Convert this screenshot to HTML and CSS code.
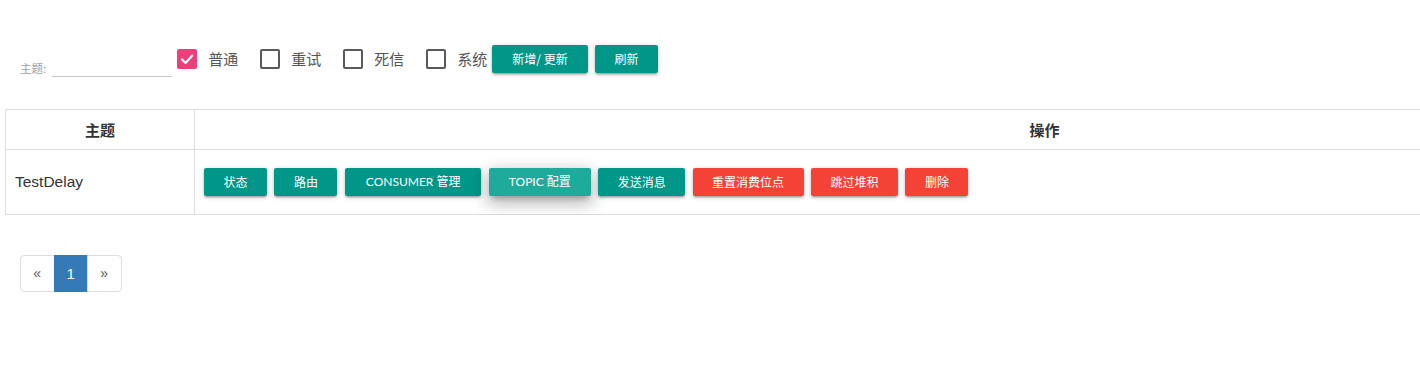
FILE: index.html
```html
<!DOCTYPE html>
<html lang="zh">
<head>
<meta charset="utf-8">
<title>Topic</title>
<link rel="stylesheet" href="styles.css">
</head>
<body>
<div class="page">
  <form class="filters">
    <div class="field">
      <label class="field-label">主题:</label>
      <span class="field-input"></span>
    </div>
    <label class="check">
      <span class="box box-on">
        <svg viewBox="0 0 20 20" width="20" height="20"><path d="M5 10.5 L8.6 14 L15.2 6.6" fill="none" stroke="#fff" stroke-width="2.2" stroke-linecap="round" stroke-linejoin="round"/></svg>
      </span>
      <span class="check-text">普通</span>
    </label>
    <label class="check">
      <span class="box"></span>
      <span class="check-text">重试</span>
    </label>
    <label class="check">
      <span class="box"></span>
      <span class="check-text">死信</span>
    </label>
    <label class="check check-last">
      <span class="box"></span>
      <span class="check-text">系统</span>
    </label>
    <button type="button" class="btn btn-add">新增/ 更新</button>
    <button type="button" class="btn">刷新</button>
  </form>

  <div class="table-wrap">
    <table class="table">
      <thead>
        <tr>
          <th class="col-topic">主题</th>
          <th>操作</th>
        </tr>
      </thead>
      <tbody>
        <tr>
          <td class="topic-name">TestDelay</td>
          <td class="ops">
            <div class="ops-row">
              <button type="button" class="btn">状态</button>
              <button type="button" class="btn">路由</button>
              <button type="button" class="btn btn-latin btn-consumer">CONSUMER 管理</button>
              <button type="button" class="btn btn-hover btn-latin">TOPIC 配置</button>
              <button type="button" class="btn">发送消息</button>
              <button type="button" class="btn btn-red">重置消费位点</button>
              <button type="button" class="btn btn-red">跳过堆积</button>
              <button type="button" class="btn btn-red">删除</button>
            </div>
          </td>
        </tr>
      </tbody>
    </table>
  </div>

  <ul class="pager">
    <li class="pager-item">«</li>
    <li class="pager-item pager-active">1</li>
    <li class="pager-item">»</li>
  </ul>
</div>
</body>
</html>
```

FILE: styles.css
```css
html, body {
  margin: 0;
  padding: 0;
  background: #fff;
  overflow: hidden;
}

body {
  font-family: "Noto Sans CJK SC", "Liberation Sans", sans-serif;
  color: #333;
}

.page {
  width: 1420px;
  height: 388px;
  overflow: hidden;
}

.filters {
  display: flex;
  align-items: center;
  height: 28px;
  margin: 45px 0 0 20px;
}

.field {
  display: flex;
  align-items: flex-end;
  align-self: flex-start;
  margin-top: 13px;
  height: 19px;
  margin-right: 5px;
}

.field-label {
  font-size: 11.5px;
  line-height: 14px;
  color: #9e9e9e;
  margin-right: 6px;
  margin-bottom: 2px;
}

.field-input {
  display: block;
  width: 120px;
  height: 18px;
  border-bottom: 1px solid #c8c8c8;
}

.check {
  display: flex;
  align-items: center;
  margin-right: 22px;
  cursor: pointer;
}

.check-last {
  margin-right: 5px;
}

.box {
  box-sizing: border-box;
  width: 20px;
  height: 20px;
  border: 2px solid #5a5a5a;
  border-radius: 2px;
  margin-right: 11px;
  display: flex;
  align-items: center;
  justify-content: center;
}

.box-on {
  background: #ec407a;
  border-color: #ec407a;
}

.box-on svg {
  display: block;
  flex: none;
}

.check-text {
  font-size: 15px;
  line-height: 20px;
  color: #555;
}

.btn {
  font-family: "Noto Sans CJK SC", "Lato", sans-serif;
  height: 28px;
  line-height: 28px;
  padding: 0 19.5px;
  margin: 0 7.4px 0 0;
  border: none;
  border-radius: 2px;
  background: #009688;
  color: #fff;
  font-size: 12px;
  cursor: pointer;
  white-space: nowrap;
  flex: none;
  box-shadow: 0 2px 2px 0 rgba(0,0,0,.14), 0 3px 1px -2px rgba(0,0,0,.12), 0 1px 5px 0 rgba(0,0,0,.2);
}

.btn-add {
  padding: 0 20px;
}

.btn-latin {
  font-family: "Lato", "Noto Sans CJK SC", sans-serif;
  font-size: 12px;
  padding: 0 20px;
}

.btn-consumer {
  padding: 0 21px;
}

.btn-hover {
  background: #1eab9c;
  box-shadow: 0 8px 17px 2px rgba(0,0,0,.16), 0 3px 14px 2px rgba(0,0,0,.14), 0 5px 5px -3px rgba(0,0,0,.22);
}

.btn-red {
  background: #f44336;
}

.table-wrap {
  margin: 36px 0 0 5px;
  width: 1415px;
  overflow: hidden;
}

.table {
  width: 1890px;
  border-collapse: collapse;
}

.table th,
.table td {
  border: 1px solid #ddd;
  padding: 0 10px;
}

.table th {
  height: 39px;
  font-size: 15px;
  font-weight: bold;
  color: #333;
  text-align: center;
}

.col-topic {
  width: 168px;
}

.table td {
  height: 64px;
}

.table td.topic-name {
  font-family: "Liberation Sans", Arial, sans-serif;
  font-size: 15.5px;
  color: #333;
  padding-left: 9px;
}

.table td.ops {
  padding-left: 9px;
}

.ops-row {
  display: flex;
  align-items: center;
}

.pager {
  list-style: none;
  display: flex;
  margin: 40px 0 0 20px;
  padding: 0;
}

.pager-item {
  box-sizing: border-box;
  width: 34.5px;
  height: 37px;
  line-height: 35px;
  text-align: center;
  font-family: "Liberation Sans", Arial, sans-serif;
  font-size: 14px;
  color: #337ab7;
  border: 1px solid #ddd;
  margin-left: -1px;
}

.pager-item:first-child {
  margin-left: 0;
  border-radius: 4px 0 0 4px;
  color: #555;
}

.pager-item:last-child {
  border-radius: 0 4px 4px 0;
  color: #555;
}

.pager-active {
  background: #337ab7;
  border-color: #337ab7;
  color: #fff;
  font-size: 15px;
}
```
